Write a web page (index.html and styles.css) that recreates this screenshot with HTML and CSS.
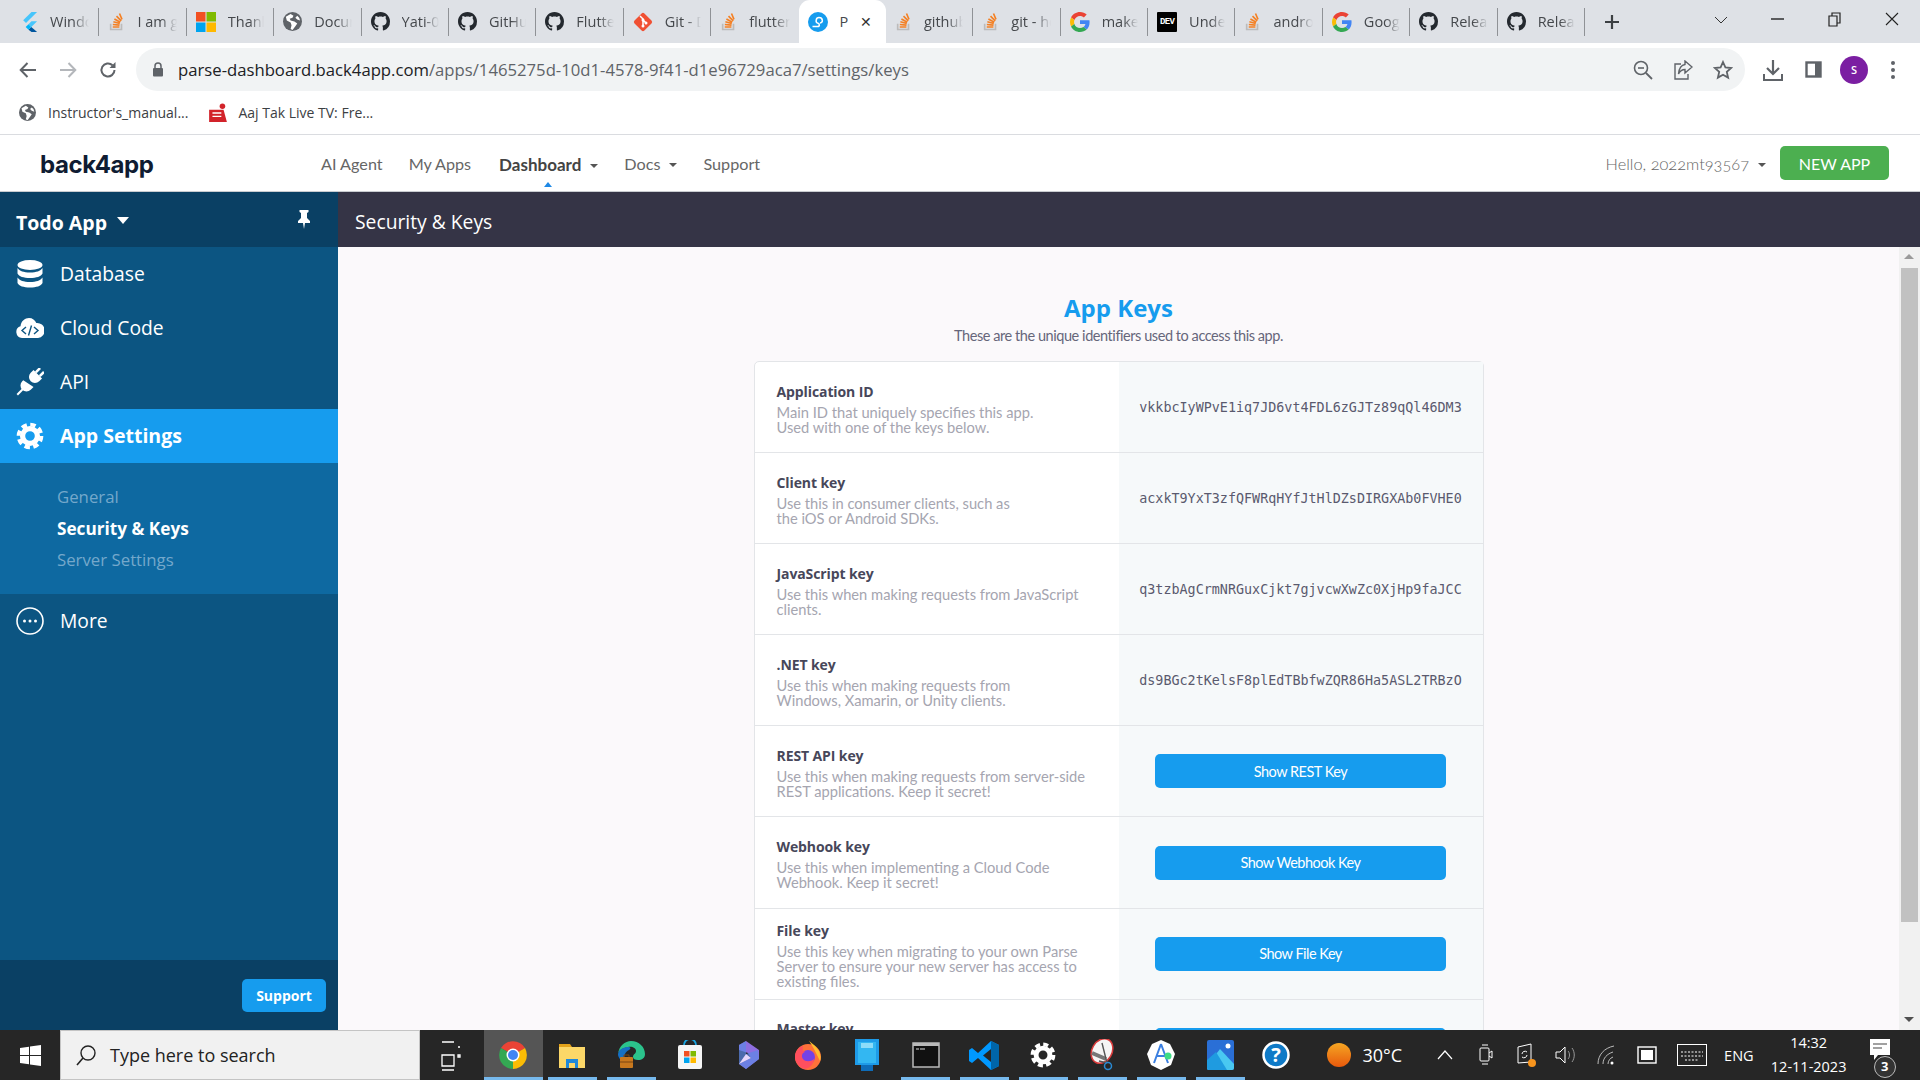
FILE: index.html
```html
<!DOCTYPE html>
<html lang="en">
<head>
    <meta charset="UTF-8">
    <meta name="viewport" content="width=device-width, initial-scale=1.0">
    <title>Security &amp; Keys</title>
    <link rel="stylesheet" href="styles.css">
</head>
<body>
<svg class="defs" width="0" height="0">
  <symbol id="i-flutter" viewBox="0 0 16 20"><path fill="#47c5fb" d="M10 0h5.600L4.500 11.100 1.700 8.300z"/><path fill="#47c5fb" d="M10 9.200h5.600L9.800 15 7 12.200z"/><path fill="#00569e" d="M7 17.800 9.800 15l5.800 5H10z"/><path fill="#00b5f8" d="M4.200 15 7 12.200 9.800 15 7 17.800z"/></symbol>
  <symbol id="i-so" viewBox="0 0 20 24"><path fill="#bcbbbb" d="M2 14h2v6h11v-6h2v8H2z"/><path fill="#f48024" d="M5.500 17h8v2h-8zM5.700 14l8 .7-.2 2-8-.7zM6.500 10.700l7.700 2.100-.5 1.900L6 12.600zM8 7.500l7 3.900-1 1.800-7-4zM10.700 4.300l5.700 5.700-1.400 1.400L9.300 5.700zM14.500 1.500l3 6.900-1.800.8-3-7z"/></symbol>
  <symbol id="i-ms" viewBox="0 0 20 20"><path fill="#f25022" d="M0 0h9.500v9.500H0z"/><path fill="#7fba00" d="M10.500 0H20v9.500h-9.500z"/><path fill="#00a4ef" d="M0 10.500h9.500V20H0z"/><path fill="#ffb900" d="M10.500 10.500H20V20h-9.500z"/></symbol>
  <symbol id="i-globe" viewBox="0 0 20 20"><circle cx="10" cy="10" r="10" fill="#5f6368"/><path fill="#fff" d="M8 2 3 5l1 4 4 2 1 3-1 4 2 1 3-4 2-3-3-2-4-1-1-2 3-1 1-2zM15 4l-2 2 2 2 3 1-1-3z"/></symbol>
  <symbol id="i-gh" viewBox="0 0 16 16"><path fill="#24292f" d="M8 0C3.580 0 0 3.580 0 8c0 3.540 2.290 6.530 5.470 7.590.4.070.55-.17.55-.38 0-.19-.01-.82-.01-1.490-2.010.37-2.530-.49-2.690-.94-.09-.23-.48-.94-.82-1.130-.28-.15-.68-.52-.01-.53.63-.01 1.080.58 1.230.82.72 1.210 1.870.87 2.330.66.07-.52.28-.87.51-1.070-1.780-.2-3.640-.89-3.640-3.950 0-.87.31-1.590.82-2.150-.08-.2-.36-1.020.08-2.120 0 0 .67-.21 2.200.82.64-.18 1.320-.27 2-.27.68 0 1.360.09 2 .27 1.530-1.040 2.200-.82 2.200-.82.44 1.100.16 1.920.08 2.120.51.56.82 1.270.82 2.150 0 3.070-1.870 3.750-3.650 3.950.29.25.54.73.54 1.480 0 1.070-.01 1.930-.01 2.200 0 .21.15.46.55.38A8.013 8.013 0 0016 8c0-4.420-3.580-8-8-8z"/></symbol>
  <symbol id="i-git" viewBox="0 0 20 20"><rect x="3" y="3" width="14" height="14" rx="2" fill="#f05033" transform="rotate(45 10 10)"/><path d="M7 4l3 3v7M10 8l3 3" stroke="#fff" stroke-width="1.500" fill="none"/><circle cx="10" cy="8" r="1.500" fill="#fff"/><circle cx="13" cy="11" r="1.500" fill="#fff"/><circle cx="10" cy="14" r="1.500" fill="#fff"/></symbol>
  <symbol id="i-parse" viewBox="0 0 20 20"><circle cx="10" cy="10" r="10" fill="#169cee"/><path d="M4.500 14.500h5c2.500 0 2.500-3 0-3.500-2-.5-2-5.500 1.500-5.500 4 0 4.500 5 1 5.500" stroke="#fff" stroke-width="1.500" fill="none"/></symbol>
  <symbol id="i-g" viewBox="0 0 48 48"><path fill="#EA4335" d="M24 9.500c3.540 0 6.710 1.220 9.210 3.600l6.850-6.850C35.900 2.380 30.470 0 24 0 14.620 0 6.510 5.380 2.560 13.220l7.980 6.190C12.430 13.720 17.740 9.500 24 9.500z"/><path fill="#4285F4" d="M46.980 24.550c0-1.570-.15-3.090-.38-4.550H24v9.020h12.940c-.58 2.960-2.260 5.480-4.780 7.180l7.730 6c4.510-4.180 7.090-10.360 7.090-17.650z"/><path fill="#FBBC05" d="M10.530 28.590c-.48-1.450-.76-2.990-.76-4.590s.27-3.140.76-4.590l-7.980-6.190C.92 16.460 0 20.120 0 24c0 3.880.92 7.540 2.560 10.780l7.970-6.190z"/><path fill="#34A853" d="M24 48c6.480 0 11.930-2.130 15.890-5.810l-7.730-6c-2.150 1.450-4.920 2.300-8.160 2.300-6.260 0-11.570-4.220-13.470-9.910l-7.980 6.190C6.510 42.620 14.620 48 24 48z"/></symbol>
  <symbol id="i-gear" viewBox="0 0 32 32"><circle cx="16" cy="16" r="8.500" fill="none" stroke="currentColor" stroke-width="6"/><circle cx="16" cy="16" r="13" fill="none" stroke="currentColor" stroke-width="4.500" stroke-dasharray="6.200 4"/></symbol>
</svg>

<div class="tabstrip">
  <div class="tab"><svg class="fav" width="17" height="20"><use href="#i-flutter"/></svg><span class="tab-label">Windows</span></div>
  <div class="tab"><svg class="fav" width="17" height="20"><use href="#i-so"/></svg><span class="tab-label">I am getting</span></div>
  <div class="tab"><svg class="fav" width="20" height="20"><use href="#i-ms"/></svg><span class="tab-label">Thank you</span></div>
  <div class="tab"><svg class="fav" width="19" height="19"><use href="#i-globe"/></svg><span class="tab-label">Document</span></div>
  <div class="tab"><svg class="fav" width="19" height="19"><use href="#i-gh"/></svg><span class="tab-label">Yati-0</span></div>
  <div class="tab"><svg class="fav" width="19" height="19"><use href="#i-gh"/></svg><span class="tab-label">GitHub</span></div>
  <div class="tab"><svg class="fav" width="19" height="19"><use href="#i-gh"/></svg><span class="tab-label">Flutter</span></div>
  <div class="tab"><svg class="fav" width="20" height="20"><use href="#i-git"/></svg><span class="tab-label">Git - Dow</span></div>
  <div class="tab tab-last"><svg class="fav" width="17" height="20"><use href="#i-so"/></svg><span class="tab-label">flutter</span></div>
  <div class="tab tab-active"><svg class="fav" width="20" height="20"><use href="#i-parse"/></svg><span class="tab-label">P</span><span class="tab-x">&#10005;</span></div>
  <div class="tab"><svg class="fav" width="17" height="20"><use href="#i-so"/></svg><span class="tab-label">github</span></div>
  <div class="tab"><svg class="fav" width="17" height="20"><use href="#i-so"/></svg><span class="tab-label">git - how</span></div>
  <div class="tab"><svg class="fav" width="20" height="20"><use href="#i-g"/></svg><span class="tab-label">make</span></div>
  <div class="tab"><span class="dev-icon">DEV</span><span class="tab-label">Under</span></div>
  <div class="tab"><svg class="fav" width="17" height="20"><use href="#i-so"/></svg><span class="tab-label">android</span></div>
  <div class="tab"><svg class="fav" width="20" height="20"><use href="#i-g"/></svg><span class="tab-label">Google</span></div>
  <div class="tab"><svg class="fav" width="19" height="19"><use href="#i-gh"/></svg><span class="tab-label">Releases</span></div>
  <div class="tab"><svg class="fav" width="19" height="19"><use href="#i-gh"/></svg><span class="tab-label">Releases</span></div>
  <div class="newtab"><svg width="16" height="16" viewBox="0 0 16 16"><path d="M8 1v14M1 8h14" stroke="#3c4043" stroke-width="2.200"/></svg></div>
  <div class="winctl">
    <svg class="wc-chev" width="14" height="8" viewBox="0 0 14 8"><path d="M1 1l6 6 6-6" fill="none" stroke="#333" stroke-width="1"/></svg>
    <svg class="wc-min" width="13" height="2" viewBox="0 0 13 2"><path d="M0 1h13" stroke="#222" stroke-width="1.400"/></svg>
    <svg class="wc-max" width="13" height="15" viewBox="0 0 13 15"><path d="M1 4h8v10H1zM4 4V1h8v10H9" fill="none" stroke="#222" stroke-width="1.200"/></svg>
    <svg class="wc-close" width="14" height="14" viewBox="0 0 14 14"><path d="M1 1l12 12M13 1L1 13" stroke="#222" stroke-width="1.100"/></svg>
  </div>
</div>

<div class="toolbar">
  <svg class="tb-back" width="18" height="16" viewBox="0 0 18 16"><path d="M17 8H2M8.500 1 1.700 8l6.800 7" fill="none" stroke="#5f6368" stroke-width="2"/></svg>
  <svg class="tb-fwd" width="18" height="16" viewBox="0 0 18 16"><path d="M1 8h15M9.500 1l6.800 7-6.800 7" fill="none" stroke="#b4b7bb" stroke-width="2"/></svg>
  <svg class="tb-reload" width="18" height="18" viewBox="0 0 18 18"><path d="M15.500 9a6.500 6.500 0 1 1-2-4.700" fill="none" stroke="#5f6368" stroke-width="2"/><path d="M16.500 1v6h-6z" fill="#5f6368"/></svg>
  <div class="urlbar">
    <svg class="lock" width="12" height="15" viewBox="0 0 12 15"><path d="M3 6V4a3 3 0 0 1 6 0v2" fill="none" stroke="#5f6368" stroke-width="1.500"/><rect x="1" y="6" width="10" height="8.500" rx="1" fill="#5f6368"/></svg>
    <span class="url"><span class="url-host">parse-dashboard.back4app.com</span>/apps/1465275d-10d1-4578-9f41-d1e96729aca7/settings/keys</span>
    <svg class="ub-zoom" width="20" height="20" viewBox="0 0 20 20"><circle cx="8" cy="8" r="6.500" fill="none" stroke="#5f6368" stroke-width="1.600"/><path d="M5 8h6" stroke="#5f6368" stroke-width="1.600"/><path d="M13 13l6 6" stroke="#5f6368" stroke-width="1.800"/></svg>
    <svg class="ub-share" width="20" height="20" viewBox="0 0 20 20"><path d="M8 4H2v15h13v-5" fill="none" stroke="#5f6368" stroke-width="1.400"/><path d="M12 1l7 6-7 6V9.500C9 9.500 7 11 5.500 14 6 9 8 5 12 4.500z" fill="none" stroke="#5f6368" stroke-width="1.400"/></svg>
    <svg class="ub-star" width="20" height="20" viewBox="0 0 20 20"><path d="M10 2l2.400 5.400 5.800.6-4.400 3.900 1.300 5.700L10 14.700l-5.100 2.900 1.300-5.700L1.800 8l5.800-.6z" fill="none" stroke="#5f6368" stroke-width="1.800"/></svg>
  </div>
  <svg class="tb-dl" width="20" height="22" viewBox="0 0 20 22"><path d="M10 1v13M4 9l6 6 6-6" fill="none" stroke="#5f6368" stroke-width="2.200"/><path d="M1 15v6h18v-6" fill="none" stroke="#5f6368" stroke-width="2"/></svg>
  <svg class="tb-panel" width="17" height="17" viewBox="0 0 17 17"><rect x="1.500" y="1.500" width="14" height="14" fill="none" stroke="#5f6368" stroke-width="2.400"/><rect x="10" y="1" width="6" height="15" fill="#5f6368"/></svg>
  <div class="avatar">S</div>
  <svg class="tb-dots" width="4" height="18" viewBox="0 0 4 18"><circle cx="2" cy="2" r="2" fill="#5f6368"/><circle cx="2" cy="9" r="2" fill="#5f6368"/><circle cx="2" cy="16" r="2" fill="#5f6368"/></svg>
</div>

<div class="bookmarks">
  <div class="bm"><svg width="17" height="17"><use href="#i-globe"/></svg><span>Instructor's_manual...</span></div>
  <div class="bm"><svg width="20" height="20" viewBox="0 0 18 18"><path d="M1 6h13l3 11H1z" fill="#d2232a"/><circle cx="13" cy="3" r="2.500" fill="#d2232a"/><path d="M4 9h8M4 12h8" stroke="#fff" stroke-width="1.200"/></svg><span>Aaj Tak Live TV: Fre...</span></div>
</div>

<header class="navbar">
  <div class="logo">back4app</div>
  <nav class="nav-links">
    <span class="nav-link">AI Agent</span>
    <span class="nav-link">My Apps</span>
    <span class="nav-link nav-active">Dashboard<i class="caret"></i></span>
    <span class="nav-link">Docs<i class="caret"></i></span>
    <span class="nav-link">Support</span>
  </nav>
  <div class="nav-right">
    <span class="hello">Hello, 2022mt93567<i class="caret"></i></span>
    <button class="new-app">NEW APP</button>
  </div>
</header>

<div class="app">
  <aside class="sidebar">
    <div class="side-head">
      <span class="app-name">Todo App</span><i class="caret-white"></i>
      <svg class="pin" width="14" height="19" viewBox="0 0 14 19"><path d="M2.500 0h9v2l-1.500 1v5l3 3v2H8l-1 6-1-6H1v-2l3-3V3L2.500 2z" fill="#fff"/></svg>
    </div>
    <div class="side-item">
      <svg class="side-icon" width="26" height="28" viewBox="0 0 26 28"><ellipse cx="13" cy="5" rx="12.500" ry="5" fill="#fff"/><path d="M.5 8c2 3 6 4.500 12.500 4.500S23.500 11 25.500 8v5.500c-1.500 3-6 4.500-12.500 4.500S2 16.500.5 13.500z" fill="#fff"/><path d="M.5 17.500c2 3 6 4.500 12.500 4.500s10.500-1.500 12.500-4.500V23c-1.500 3-6 4.500-12.500 4.500S2 26 .5 23z" fill="#fff"/></svg>
      <span>Database</span>
    </div>
    <div class="side-item">
      <svg class="side-icon" width="28" height="20" viewBox="0 0 28 20"><path d="M6 20a6 6 0 0 1-1.500-11.700C5 3 9 0 13 0c3.500 0 6 2 7.300 5A7.500 7.500 0 0 1 22 20z" fill="#fff"/><path d="M10 9l-4 3.500 4 3.500M18 9l4 3.500-4 3.500M15.500 7.500l-3 10" fill="none" stroke="#0c5582" stroke-width="1.400"/></svg>
      <span>Cloud Code</span>
    </div>
    <div class="side-item">
      <svg class="side-icon" width="28" height="28" viewBox="0 0 28 28"><g transform="rotate(45 14 14)" fill="#fff"><rect x="10" y="-3" width="2.500" height="6"/><rect x="15.500" y="-3" width="2.500" height="6"/><path d="M8 3h12v4a6 6 0 0 1-12 0z"/><path d="M8 17.500 20 15v4a6 6 0 0 1-12 0z"/><rect x="13" y="24" width="2" height="8"/></g></svg>
      <span>API</span>
    </div>
    <div class="side-item side-active">
      <svg class="side-icon" width="28" height="28"><use href="#i-gear"/></svg>
      <span>App Settings</span>
    </div>
    <div class="side-sub">
      <div class="sub-link">General</div>
      <div class="sub-link sub-active">Security &amp; Keys</div>
      <div class="sub-link">Server Settings</div>
    </div>
    <div class="side-item">
      <svg class="side-icon" width="28" height="28" viewBox="0 0 28 28"><circle cx="14" cy="14" r="13" fill="none" stroke="#fff" stroke-width="1.600"/><circle cx="8.500" cy="14" r="1.500" fill="#fff"/><circle cx="14" cy="14" r="1.500" fill="#fff"/><circle cx="19.500" cy="14" r="1.500" fill="#fff"/></svg>
      <span>More</span>
    </div>
    <div class="side-spacer"></div>
    <div class="side-foot"><button class="support-btn">Support</button></div>
  </aside>

  <main class="main">
    <div class="page-title">Security &amp; Keys</div>
    <div class="page-body">
      <div class="content">
        <h1 class="section-title">App Keys</h1>
        <p class="section-sub">These are the unique identifiers used to access this app.</p>
        <div class="card">
          <div class="row">
            <div class="row-label"><div class="row-title">Application ID</div><div class="row-desc">Main ID that uniquely specifies this app.<br>Used with one of the keys below.</div></div>
            <div class="row-value"><code class="key">vkkbcIyWPvE1iq7JD6vt4FDL6zGJTz89qQl46DM3</code></div>
          </div>
          <div class="row">
            <div class="row-label"><div class="row-title">Client key</div><div class="row-desc">Use this in consumer clients, such as<br>the iOS or Android SDKs.</div></div>
            <div class="row-value"><code class="key">acxkT9YxT3zfQFWRqHYfJtHlDZsDIRGXAb0FVHE0</code></div>
          </div>
          <div class="row">
            <div class="row-label"><div class="row-title">JavaScript key</div><div class="row-desc">Use this when making requests from JavaScript<br>clients.</div></div>
            <div class="row-value"><code class="key">q3tzbAgCrmNRGuxCjkt7gjvcwXwZc0XjHp9faJCC</code></div>
          </div>
          <div class="row">
            <div class="row-label"><div class="row-title">.NET key</div><div class="row-desc">Use this when making requests from<br>Windows, Xamarin, or Unity clients.</div></div>
            <div class="row-value"><code class="key">ds9BGc2tKelsF8plEdTBbfwZQR86Ha5ASL2TRBzO</code></div>
          </div>
          <div class="row">
            <div class="row-label"><div class="row-title">REST API key</div><div class="row-desc">Use this when making requests from server-side<br>REST applications. Keep it secret!</div></div>
            <div class="row-value"><button class="show-btn">Show REST Key</button></div>
          </div>
          <div class="row">
            <div class="row-label"><div class="row-title">Webhook key</div><div class="row-desc">Use this when implementing a Cloud Code<br>Webhook. Keep it secret!</div></div>
            <div class="row-value"><button class="show-btn">Show Webhook Key</button></div>
          </div>
          <div class="row">
            <div class="row-label"><div class="row-title">File key</div><div class="row-desc">Use this key when migrating to your own Parse<br>Server to ensure your new server has access to<br>existing files.</div></div>
            <div class="row-value"><button class="show-btn">Show File Key</button></div>
          </div>
          <div class="row">
            <div class="row-label"><div class="row-title">Master key</div><div class="row-desc">Use this key to override ACLs.<br>Keep it secret!</div></div>
            <div class="row-value"><button class="show-btn">Show Master Key</button></div>
          </div>
        </div>
      </div>
      <div class="scrollbar">
        <i class="sb-up"></i>
        <div class="sb-thumb"></div>
        <i class="sb-down"></i>
      </div>
    </div>
  </main>
</div>

<footer class="taskbar">
  <div class="start"><svg width="21" height="21" viewBox="0 0 21 21"><path fill="#fff" d="M0 3l9-1.300V10H0zM10 1.500 21 0v10H10zM0 11h9v8.300L0 18zM10 11h11v10l-11-1.500z"/></svg></div>
  <div class="search">
    <svg width="22" height="22" viewBox="0 0 22 22"><circle cx="13" cy="9" r="7" fill="none" stroke="#222" stroke-width="1.400"/><path d="M8 14l-6 7" stroke="#222" stroke-width="1.600"/></svg>
    <span>Type here to search</span>
  </div>
  <div class="task-view"><svg width="20" height="34" viewBox="0 0 20 34"><path d="M1 3h12M1 16h12v11H1zM1 31h12M17 8h2M17 16h2v2h-2z" fill="none" stroke="#fff" stroke-width="1.300"/></svg></div>
  <div class="task-apps">
    <div class="task-app task-focus task-open"><svg width="30" height="30" viewBox="0 0 30 30"><path d="M15 15 3 8a14 14 0 0 1 24 0z" fill="#ea4335"/><path d="M15 15 27 8a14 14 0 0 1-12 21z" fill="#fbbc05"/><path d="M15 15v14A14 14 0 0 1 3 8z" fill="#34a853"/><circle cx="15" cy="15" r="6.500" fill="#fff"/><circle cx="15" cy="15" r="5" fill="#4285f4"/></svg></div>
    <div class="task-app task-open"><svg width="28" height="28" viewBox="0 0 28 28"><path d="M1 3h11l2 3H1z" fill="#e3a21a"/><rect x="1" y="6" width="26" height="21" fill="#fcd768"/><path d="M8 27v-9h12v9h-3v-5h-6v5z" fill="#1f88d9"/></svg></div>
    <div class="task-app task-open"><svg width="30" height="30" viewBox="0 0 30 30"><path d="M2 14C3 6 9 1 15 1c8 0 14 6 14 13 0 4-3 6-7 6-3 0-5-1-5-3 0-3 3-3 3-6s-4-5-8-4c-5 1-9 3-10 7z" fill="#2bc38c"/><path d="M2 14c1-5 6-7 10-7 3 0 3 2 1 3-5 2-6 8-3 13-5-2-8-5-8-9z" fill="#1570c4"/><rect x="4" y="17" width="13" height="11" rx="1" fill="#c8781e"/><path d="M8 17v-2h5v2M4 22h13" stroke="#7a4510" fill="none"/></svg></div>
    <div class="task-app"><svg width="30" height="30" viewBox="0 0 30 30"><path d="M9 5a6 6 0 0 1 12 0" fill="none" stroke="#19a4e0" stroke-width="1.800"/><rect x="3" y="5" width="24" height="24" rx="2" fill="#f5f5f5"/><path fill="#f25022" d="M9 11h5.500v5.500H9z"/><path fill="#7fba00" d="M15.500 11H21v5.500h-5.500z"/><path fill="#00a4ef" d="M9 17.500h5.500V23H9z"/><path fill="#ffb900" d="M15.500 17.500H21V23h-5.500z"/></svg></div>
    <div class="task-app"><svg width="26" height="30" viewBox="0 0 26 30"><path d="M3 5 10 1l13 9v9L10 29l-7-5 12-6-3-5-9-3z" fill="#8f6ee0"/><path d="M3 5l7-4v13l12-4 1 9L10 29 3 24z" fill="#5c87e6" opacity=".7"/><path d="M10 14l5 4-12 6z" fill="#e6d5fb"/></svg></div>
    <div class="task-app"><svg width="28" height="32" viewBox="0 0 28 32"><circle cx="14" cy="18" r="13" fill="#ff7139"/><path d="M14 0c2 4 8 6 11 12 2 4 2 8 1 10L20 10z" fill="#ffbd2e"/><circle cx="14" cy="18" r="7" fill="#7542e5"/><path d="M1 18C1 12 5 8 9 7c-1 3 0 5 2 6-3 1-4 4-2 7 2 3 8 3 11 0 0 6-6 10-10 10-5-2-9-7-9-12z" fill="#ff4f5e"/></svg></div>
    <div class="task-app"><svg width="26" height="34" viewBox="0 0 26 34"><rect x="1" y="1" width="24" height="26" fill="#1e9be8"/><rect x="4" y="4" width="18" height="21" fill="#33b7f2"/><rect x="7" y="5" width="12" height="5" fill="#8edcf9"/><rect x="7" y="27" width="12" height="6" fill="#0e6cb8"/></svg></div>
    <div class="task-app task-open"><svg width="28" height="26" viewBox="0 0 28 26"><rect x="1" y="1" width="26" height="24" fill="#111" stroke="#b9b9b9" stroke-width="1.500"/><path d="M1 1h26v3H1z" fill="#b9b9b9"/><path d="M4 7h3M8 7h5" stroke="#ddd" stroke-width="1.200"/></svg></div>
    <div class="task-app task-open"><svg width="31" height="31" viewBox="0 0 31 31"><path d="M22 1l8 4v21l-8 4L9 18l-6 5-3-2v-11l3-2 6 5z" fill="#0098ff"/><path d="M22 1l8 4v21l-8 4z" fill="#0065a9"/><path d="M22 9l-8 6.500 8 6.500z" fill="#252525"/></svg></div>
    <div class="task-app task-open gear-app"><svg width="26" height="26"><use href="#i-gear"/></svg></div>
    <div class="task-app task-open"><svg width="30" height="32" viewBox="0 0 30 32"><ellipse cx="15" cy="12" rx="10" ry="13" fill="#f5f5f5" stroke="#d83b3b" stroke-width="1.500" transform="rotate(30 15 12)"/><path d="M5 14l14 6" stroke="#777" stroke-width="4"/><path d="M15 4l5 20M12 22l8 2" stroke="#555" stroke-width="1.400"/><circle cx="21" cy="27" r="3.500" fill="none" stroke="#2a8ad4" stroke-width="1.500"/></svg></div>
    <div class="task-app task-open"><svg width="30" height="32" viewBox="0 0 30 32"><path d="M15 1l9 4 5 10-4 11-10 5-10-5L1 15 6 5z" fill="#fff"/><path d="M15 5l-7 19M15 5l7 19M10 17h10" stroke="#3b7fe0" stroke-width="2" fill="none"/><circle cx="22" cy="17" r="3.500" fill="#3ddc84"/></svg></div>
    <div class="task-app task-open"><svg width="27" height="30" viewBox="0 0 27 30"><rect width="27" height="30" rx="2" fill="#2a6fd6"/><path d="M0 26l13-17 14 15v4a2 2 0 0 1-2 2H2a2 2 0 0 1-2-2z" fill="#49c8f1"/><path d="M0 20 9 12 20 30H2a2 2 0 0 1-2-2z" fill="#1f9be0"/><circle cx="21" cy="6" r="2.500" fill="#fff"/></svg></div>
    <div class="task-app task-help"><svg width="28" height="28" viewBox="0 0 28 28"><circle cx="14" cy="14" r="12.500" fill="#0f7ac7" stroke="#fff" stroke-width="2.500"/><text x="14" y="21" text-anchor="middle" class="help-mark">?</text></svg></div>
  </div>
  <div class="tray">
    <span class="sun"></span>
    <span class="temp">30°C</span>
    <svg class="tr-up" width="16" height="10" viewBox="0 0 16 10"><path d="M1 9l7-8 7 8" fill="none" stroke="#fff" stroke-width="1.200"/></svg>
    <svg class="tr-meet" width="14" height="22" viewBox="0 0 14 22"><rect x="1" y="4" width="9" height="13" rx="1" fill="none" stroke="#fff"/><path d="M10 9l3-2v7l-3-2M3 1h6M3 20h6" fill="none" stroke="#fff"/></svg>
    <svg class="tr-sync" width="20" height="24" viewBox="0 0 20 24"><path d="M1 4l13-3v18l-13 1z" fill="none" stroke="#fff"/><path d="M5 11a3 3 0 0 1 5-2M10 12a3 3 0 0 1-5 2" fill="none" stroke="#fff"/><circle cx="15" cy="20" r="4" fill="#f7941d"/></svg>
    <svg class="tr-vol" width="22" height="18" viewBox="0 0 22 18"><path d="M1 6h4l5-5v16l-5-5H1z" fill="none" stroke="#fff"/><path d="M13 5c2 2 2 6 0 8M17 2c3 4 3 10 0 14" fill="none" stroke="#999"/></svg>
    <svg class="tr-wifi" width="18" height="20" viewBox="0 0 18 20"><path d="M1 19C1 10 7 3 17 1M6 19c0-6 4-10 10-12M11 19c0-3 2-6 5-7" fill="none" stroke="#bbb"/><circle cx="15" cy="18" r="1.500" fill="#fff"/></svg>
    <svg class="tr-batt" width="20" height="18" viewBox="0 0 20 18"><rect x="1" y="1" width="18" height="16" fill="none" stroke="#fff" stroke-width="1.400"/><rect x="4" y="4" width="12" height="10" fill="#fff"/></svg>
    <svg class="tr-kbd" width="30" height="22" viewBox="0 0 30 22"><rect x=".5" y=".5" width="29" height="21" fill="none" stroke="#fff"/><path d="M4 8h22M4 12h22M8 16h14" stroke="#fff" stroke-dasharray="2 1.500"/></svg>
    <span class="lang">ENG</span>
    <div class="clock"><span>14:32</span><span>12-11-2023</span></div>
    <div class="notif">
      <svg width="20" height="22" viewBox="0 0 20 22"><path d="M0 0h20v16H8l-4 5v-5H0z" fill="#fff"/><path d="M3 5h14M3 9h9" stroke="#444" stroke-width="1.200"/></svg>
      <span class="notif-count">3</span>
    </div>
  </div>
</footer>
</body>
</html>
```

FILE: styles.css
```css
* {
  box-sizing: border-box;
}

html, body {
  margin: 0;
  height: 100%;
}

body {
  display: flex;
  flex-direction: column;
  height: 1080px;
  overflow: hidden;
  font-family: "Open Sans", sans-serif;
  background: #fff;
}

.defs {
  position: absolute;
}

/* browser tabs */
.tabstrip {
  height: 43px;
  flex: none;
  display: flex;
  align-items: center;
  padding-left: 12px;
  background: #dee1e6;
}

.tab {
  width: 87.4px;
  height: 28px;
  flex: none;
  display: flex;
  align-items: center;
  gap: 12px;
  padding: 0 9px;
  border-right: 1px solid #8f9296;
  overflow: hidden;
}

.tab-last {
  border-right: none;
}

.tab-active {
  height: 43px;
  align-self: flex-end;
  background: #fff;
  border-right: none;
  border-radius: 11px 11px 0 0;
}

.tab-label {
  flex: 1;
  min-width: 0;
  white-space: nowrap;
  overflow: hidden;
  font-size: 14.5px;
  color: #45484c;
  -webkit-mask-image: linear-gradient(to right, #000 60%, transparent);
  mask-image: linear-gradient(to right, #000 60%, transparent);
}

.tab-active .tab-label {
  -webkit-mask-image: none;
  mask-image: none;
}

.tab-x {
  font-size: 14px;
  color: #333;
  padding-right: 5px;
}

.fav {
  flex: none;
}

.dev-icon {
  flex: none;
  width: 20px;
  height: 20px;
  background: #000;
  color: #fff;
  font: bold 9px/20px "Liberation Mono", monospace;
  text-align: center;
  border-radius: 1px;
  letter-spacing: -.6px;
}

.newtab {
  width: 54px;
  display: flex;
  justify-content: center;
}

.winctl {
  flex: 1;
  display: flex;
  align-items: center;
  height: 100%;
}

.wc-chev { margin-left: 75px; margin-top: -4px; }
.wc-min { margin-left: 43px; margin-top: -5px; }
.wc-max { margin-left: 44px; margin-top: -5px; }
.wc-close { margin-left: 44px; margin-top: -5px; }

/* address bar */
.toolbar {
  height: 48px;
  flex: none;
  display: flex;
  align-items: center;
  padding-top: 5px;
  background: #fff;
}

.tb-back { margin-left: 19px; }
.tb-fwd { margin-left: 22px; }
.tb-reload { margin-left: 22px; }

.urlbar {
  width: 1609px;
  height: 43px;
  margin-left: 19px;
  display: flex;
  align-items: center;
  padding-left: 16px;
  background: #f1f3f4;
  border-radius: 22px;
}

.url {
  flex: 1;
  margin-left: 14px;
  font-size: 16.7px;
  color: #5f6368;
  white-space: nowrap;
}

.url-host {
  color: #202124;
}

.ub-share { margin-left: 20px; }
.ub-star { margin: 0 12px 0 20px; }

.tb-dl { margin-left: 18px; }
.tb-panel { margin-left: 22px; }

.avatar {
  width: 28px;
  height: 28px;
  margin-left: 18px;
  border-radius: 50%;
  background: #7b1fa2;
  color: #fff;
  font-size: 11px;
  font-weight: 600;
  line-height: 28px;
  text-align: center;
}

.tb-dots { margin-left: 23px; }

.bookmarks {
  height: 44px;
  flex: none;
  display: flex;
  align-items: center;
  gap: 20px;
  padding-left: 19px;
  background: #fff;
  border-bottom: 1px solid #dadce0;
}

.bm {
  display: flex;
  align-items: center;
  gap: 12px;
  font-size: 14px;
  color: #3c4043;
}

.bm + .bm {
  gap: 10px;
}

/* back4app navbar */
.navbar {
  height: 57px;
  flex: none;
  display: flex;
  align-items: center;
  padding: 0 31px 0 40px;
  background: #fff;
  border-bottom: 1px solid #c9ccd0;
}

.logo {
  width: 281px;
  margin-top: 3px;
  font-family: Inter, sans-serif;
  font-size: 24px;
  font-weight: 700;
  letter-spacing: -.4px;
  color: #0f1c32;
}

.nav-links {
  display: flex;
  gap: 26px;
  margin-top: 3px;
  font-family: Lato, sans-serif;
  font-size: 16.2px;
  color: #666;
}

.nav-link {
  position: relative;
  font-weight: 400;
}

.nav-active {
  margin-left: 2px;
  font-size: 17px;
  font-weight: 700;
  color: #444;
}

.nav-active::after {
  content: "";
  position: absolute;
  left: 45px;
  bottom: -12px;
  border: 4px solid transparent;
  border-top: 0;
  border-bottom: 5px solid #1e88e5;
}

.caret {
  display: inline-block;
  margin-left: 9px;
  vertical-align: 3px;
  border: 4px solid transparent;
  border-bottom: 0;
  border-top: 4px solid #555;
}

.nav-right {
  margin-left: auto;
  display: flex;
  align-items: center;
  gap: 14px;
}

.hello {
  font-family: Lato, sans-serif;
  font-size: 16.4px;
  font-weight: 300;
  color: #666;
  font-variant-numeric: oldstyle-nums;
}

.new-app {
  width: 109px;
  height: 34px;
  border: 0;
  border-radius: 5px;
  background: #4caf50;
  color: #fff;
  font-family: Lato, sans-serif;
  font-size: 16px;
}

/* dashboard */
.app {
  flex: 1;
  min-height: 0;
  display: flex;
}

.sidebar {
  width: 338px;
  flex: none;
  display: flex;
  flex-direction: column;
  background: #0c5582;
  color: #fff;
}

.side-head {
  height: 55px;
  flex: none;
  display: flex;
  align-items: center;
  padding: 5px 27px 0 16px;
  background: #0a4064;
}

.app-name {
  font-size: 19.5px;
  font-weight: 700;
}

.caret-white {
  margin-left: 10px;
  margin-top: -4px;
  border: 6px solid transparent;
  border-bottom: 0;
  border-top: 7px solid #fff;
}

.pin {
  margin-left: auto;
  margin-top: -5px;
}

.side-item {
  height: 54px;
  flex: none;
  display: flex;
  align-items: center;
  gap: 16px;
  padding: 0 0 1px 16px;
  font-size: 19.3px;
}

.side-icon {
  flex: none;
  width: 28px;
  color: #fff;
}

.side-active {
  background: #169cee;
  font-size: 19.5px;
  font-weight: 700;
}

.side-sub {
  height: 131px;
  flex: none;
  padding-top: 18px;
  padding-left: 57px;
  background: #0e69a1;
  font-size: 16.8px;
  color: #74a8cb;
}

.sub-link {
  height: 31.5px;
  line-height: 31.5px;
}

.sub-active {
  color: #fff;
  font-size: 17.2px;
  font-weight: 700;
}

.side-spacer {
  flex: 1;
}

.side-foot {
  height: 70px;
  flex: none;
  display: flex;
  justify-content: flex-end;
  padding: 19px 12px 0 0;
  background: #0a4064;
}

.support-btn {
  width: 84px;
  height: 33px;
  border: 0;
  border-radius: 5px;
  background: #169cee;
  color: #fff;
  font-family: "Open Sans", sans-serif;
  font-size: 14px;
  font-weight: 700;
}

.main {
  flex: 1;
  min-width: 0;
  display: flex;
  flex-direction: column;
}

.page-title {
  height: 55px;
  flex: none;
  padding-left: 17px;
  line-height: 60px;
  background: #353446;
  color: #fff;
  font-size: 19.3px;
}

.page-body {
  flex: 1;
  min-height: 0;
  display: flex;
  background: #fbf9fb;
}

.content {
  flex: 1;
  min-width: 0;
  overflow: hidden;
  padding-top: 43px;
}

.section-title {
  margin: 0;
  font-size: 24px;
  font-weight: 700;
  line-height: 36px;
  color: #169cee;
  text-align: center;
}

.section-sub {
  margin: 0 0 15px;
  font-family: Lato, sans-serif;
  font-size: 14.5px;
  letter-spacing: -.44px;
  line-height: 20px;
  color: #66667a;
  text-align: center;
}

.card {
  width: 730px;
  margin: 0 auto;
  border: 1px solid #e3e5e8;
  border-radius: 5px 5px 0 0;
  background: #fff;
}

.row {
  height: 91.1px;
  display: flex;
  border-bottom: 1px solid #e3e5e8;
}

.row-label {
  width: 364px;
  display: flex;
  flex-direction: column;
  justify-content: center;
  gap: 3px;
  padding: 1px 20px 0 22px;
}

.row-title {
  font-size: 14px;
  font-weight: 700;
  letter-spacing: -.1px;
  line-height: 21px;
  color: #47475a;
}

.row-desc {
  font-family: Lato, sans-serif;
  font-size: 14.7px;
  line-height: 15px;
  color: #a5a5b0;
}

.row-value {
  flex: 1;
  display: flex;
  align-items: center;
  justify-content: center;
  background: #f6f9fa;
}

.key {
  font-family: "DejaVu Sans Mono", monospace;
  font-size: 13.4px;
  color: #5a5a6e;
}

.show-btn {
  width: 291px;
  height: 34px;
  border: 0;
  border-radius: 5px;
  background: #169cee;
  color: #fff;
  font-family: Lato, sans-serif;
  font-size: 14.5px;
  letter-spacing: -.5px;
}

.scrollbar {
  width: 21px;
  flex: none;
  position: relative;
  padding: 21px 2px 0;
  background: #f1f1f1;
}

.sb-thumb {
  height: 654px;
  background: #c1c1c1;
}

.sb-up, .sb-down {
  position: absolute;
  left: 5px;
  border: 5px solid transparent;
}

.sb-up {
  top: 7px;
  border-top: 0;
  border-bottom: 5px solid #9a9a9a;
}

.sb-down {
  bottom: 8px;
  border-bottom: 0;
  border-top: 5px solid #505050;
}

/* windows taskbar */
.taskbar {
  height: 50px;
  flex: none;
  display: flex;
  align-items: center;
  background: #262626;
  color: #fff;
}

.start {
  width: 60px;
  display: flex;
  justify-content: center;
}

.search {
  width: 360px;
  height: 50px;
  display: flex;
  align-items: center;
  gap: 13px;
  padding-left: 14px;
  background: #f1f1f1;
  border: 1px solid #c4c4c4;
  color: #222;
  font-size: 18px;
}

.task-view {
  width: 64px;
  display: flex;
  justify-content: center;
  padding: 2px 3px 0 0;
}

.task-apps {
  display: flex;
}

.task-app {
  width: 58.9px;
  height: 50px;
  flex: none;
  display: flex;
  align-items: center;
  justify-content: center;
  position: relative;
}

.task-help {
  margin-left: -3px;
  margin-right: 3px;
}

.task-focus {
  background: #555;
}

.task-open::after {
  content: "";
  position: absolute;
  left: 5px;
  right: 5px;
  bottom: 0;
  height: 3px;
  background: #76b9ed;
}

.task-focus::after {
  left: 0;
  right: 0;
}

.gear-app {
  color: #fff;
}

.help-mark {
  font-family: "Open Sans", sans-serif;
  font-size: 20px;
  font-weight: 700;
  fill: #fff;
}

.tray {
  flex: 1;
  display: flex;
  align-items: center;
  position: relative;
  height: 100%;
}

.sun {
  width: 24px;
  height: 24px;
  margin-left: 19px;
  border-radius: 50%;
  background: linear-gradient(#f5a623, #e8590c);
}

.temp {
  margin-left: 11px;
  font-size: 18px;
}

.tr-up { margin-left: 35px; }
.tr-meet { margin-left: 26px; }
.tr-sync { margin-left: 24px; }
.tr-vol { margin-left: 18px; }
.tr-wifi { margin-left: 20px; }
.tr-batt { margin-left: 22px; }
.tr-kbd { margin-left: 20px; }

.lang {
  margin-left: 17px;
  font-size: 14.5px;
}

.clock {
  width: 90px;
  margin-left: 10px;
  display: flex;
  flex-direction: column;
  align-items: center;
  gap: 6px;
  font-size: 14.5px;
  line-height: 18px;
}

.notif {
  position: relative;
  margin-left: 16px;
  margin-top: -6px;
}

.notif-count {
  position: absolute;
  right: -6px;
  bottom: -12px;
  width: 22px;
  height: 22px;
  border: 1.5px solid #bbb;
  border-radius: 50%;
  background: #333;
  font-size: 13px;
  font-weight: 700;
  line-height: 19px;
  text-align: center;
}
```
